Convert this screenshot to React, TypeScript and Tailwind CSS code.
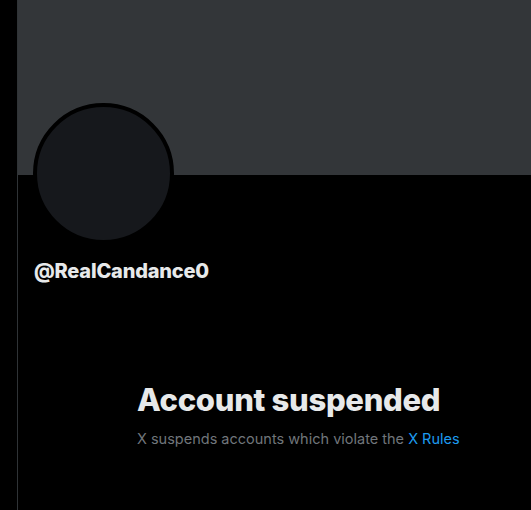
export default function App() {
  return (
    <div className="h-[510px] w-[531px] overflow-hidden bg-black flex" style={{ fontFamily: "Inter, 'Liberation Sans', sans-serif" }}>
      <div className="w-[17px] shrink-0" />
      <div className="flex-1 border-l border-[#2f3336] flex flex-col">
        <div className="h-[175px] bg-[#333639] shrink-0" />
        <div className="relative px-4">
          <div className="-mt-[72px] ml-[-1px] w-[141px] h-[141px] rounded-full border-4 border-black bg-[#16181c]" />
          <div className="mt-[15px] text-[20px] leading-6 font-extrabold text-[#e7e9ea] tracking-[-0.2px]">
            @RealCandance0
          </div>
          <div className="mt-[99px] pl-[103px]">
            <h1 className="text-[31px] leading-9 font-extrabold text-[#e7e9ea] tracking-[-0.3px]">
              Account suspended
            </h1>
            <p className="mt-[11px] text-[14.5px] leading-5 text-[#71767b]">
              X suspends accounts which violate the <span className="text-[#1d9bf0]">X Rules</span>
            </p>
          </div>
        </div>
      </div>
    </div>
  );
}
